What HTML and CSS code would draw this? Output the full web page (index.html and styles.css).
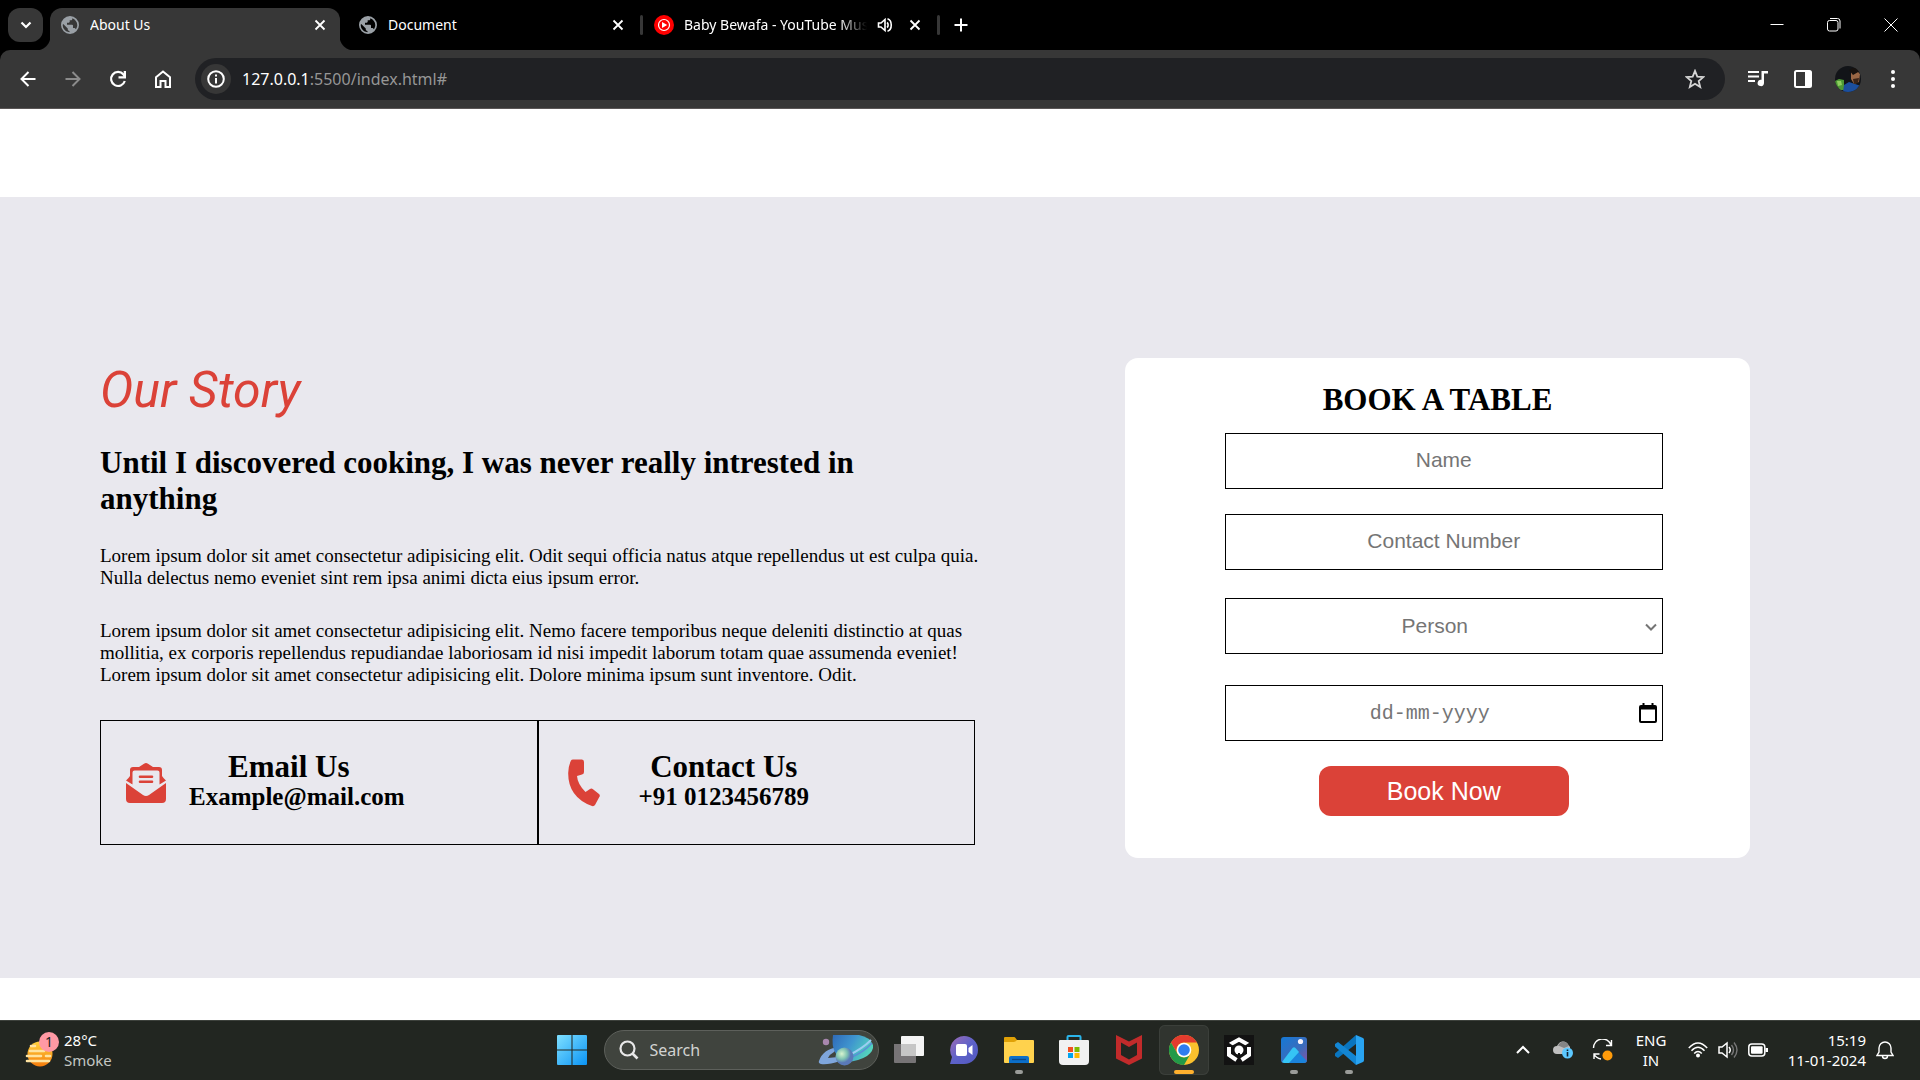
FILE: index.html
```html
<!DOCTYPE html>
<html lang="en">
<head>
<meta charset="utf-8">
<title>About Us</title>
<link rel="stylesheet" href="styles.css">
</head>
<body>
<svg class="defs" aria-hidden="true">
  <defs>
    <symbol id="globe" viewBox="0 0 24 24"><path fill="#9aa0a6" fill-rule="evenodd" d="M12 0a12 12 0 1 0 0 24 12 12 0 0 0 0-24zM3 10.500 9 16.500v1.300c0 1.200 1 2.300 2.300 2.300v1.400C6 21 2.300 17 2.300 12c0-.5.100-1 .700-1.500zM15 3c3.900 1.400 6.700 5 6.700 9 0 2.200-.8 4.200-2 5.800-.4-1-1.300-1.700-2.400-1.700H16v-3.400c0-.7-.5-1.200-1.200-1.200H8V9h2.400c.7 0 1.200-.6 1.200-1.200V5.500H14c.8 0 1.400-1 1-2.500z"/></symbol>
    <symbol id="close" viewBox="0 0 12 12"><path fill="none" stroke="#fff" stroke-width="1.800" d="M1.500 1.500l9 9M10.500 1.500l-9 9"/></symbol>
  </defs>
</svg>

<header class="browser">
  <div class="tabs">
    <button class="tab-search" aria-label="Search tabs"><svg width="12" height="12" viewBox="0 0 12 12"><path fill="none" stroke="#fff" stroke-width="2.200" d="M1.500 3.500 6 8l4.500-4.500"/></svg></button>
    <div class="tab active">
      <svg width="18" height="18"><use href="#globe"/></svg><span class="tab-title">About Us</span>
      <button class="tab-close" aria-label="Close tab"><svg width="12" height="12"><use href="#close"/></svg></button>
    </div>
    <span class="divider hidden"></span>
    <div class="tab">
      <svg width="18" height="18"><use href="#globe"/></svg><span class="tab-title">Document</span>
      <button class="tab-close" aria-label="Close tab"><svg width="12" height="12"><use href="#close"/></svg></button>
    </div>
    <span class="divider"></span>
    <div class="tab media">
      <svg width="20" height="20" viewBox="0 0 20 20"><circle cx="10" cy="10" r="10" fill="#f00"/><circle cx="10" cy="10" r="5.500" fill="none" stroke="#fff" stroke-width="1.200"/><path fill="#fff" d="M8 7l5.200 3L8 13z"/></svg><span class="tab-title fade">Baby Bewafa - YouTube Mus</span>
      <svg width="16" height="16" viewBox="0 0 16 16"><path fill="none" stroke="#fff" stroke-width="1.600" d="M1.500 6v4H4l4 3.500v-11L4 6zM10 5.500c1.500 1 1.500 4 0 5M10.500 1.800c5 1.500 5 11 0 12.400"/></svg>
      <button class="tab-close" aria-label="Close tab"><svg width="12" height="12"><use href="#close"/></svg></button>
    </div>
    <span class="divider"></span>
    <button class="new-tab" aria-label="New tab"><svg width="14" height="14" viewBox="0 0 14 14"><path stroke="#fff" stroke-width="2" d="M7 .5v13M.5 7h13"/></svg></button>
    <div class="window-buttons">
      <button aria-label="Minimize"><svg width="14" height="14" viewBox="0 0 14 14"><path stroke="#fff" d="M.5 6.500h13"/></svg></button>
      <button aria-label="Restore"><svg width="14" height="14" viewBox="0 0 14 14"><rect x=".5" y="2.500" width="10.500" height="10.500" rx="2" fill="none" stroke="#fff"/><path fill="none" stroke="#fff" d="M3 .5h7.500q2.500 0 2.500 2.500v7.500"/></svg></button>
      <button aria-label="Close"><svg width="14" height="14" viewBox="0 0 14 14"><path stroke="#fff" d="M.5.5l13 13M13.500.5l-13 13"/></svg></button>
    </div>
  </div>

  <div class="toolbar">
    <button class="tool" aria-label="Back"><svg width="16" height="16" viewBox="0 0 16 16"><path fill="none" stroke="#fff" stroke-width="2" d="M15.500 8H2M8.500 1 1.500 8l7 7"/></svg></button>
    <button class="tool" aria-label="Forward"><svg width="16" height="16" viewBox="0 0 16 16"><path fill="none" stroke="#8b8b8b" stroke-width="2" d="M.5 8H14M7.500 1l7 7-7 7"/></svg></button>
    <button class="tool" aria-label="Reload"><svg width="18" height="18" viewBox="0 0 18 18"><path fill="none" stroke="#fff" stroke-width="2.200" d="M15.800 11A7 7 0 1 1 14.500 4.500L16 6.500"/><path fill="#fff" d="M17 1v7.500h-7.500V6.300h5.200V1z"/></svg></button>
    <button class="tool" aria-label="Home"><svg width="18" height="18" viewBox="0 0 18 18"><path fill="none" stroke="#fff" stroke-width="2" d="M2 7.200 9 1.500l7 5.700V17h-4.500v-6h-5v6H2z"/></svg></button>
    <div class="omnibox">
      <button class="site-info" aria-label="Site information"><svg width="18" height="18" viewBox="0 0 18 18"><circle cx="9" cy="9" r="7.800" fill="none" stroke="#fff" stroke-width="2"/><path fill="#fff" d="M8 4.500h2v2H8zM8 8h2v5.500H8z"/></svg></button>
      <span class="url"><b>127.0.0.1</b>:5500/index.html#</span>
      <button class="star" aria-label="Bookmark"><svg width="20" height="20" viewBox="0 0 20 20"><path fill="none" stroke="#d5d5d5" stroke-width="1.800" d="M10 1.900l2.300 5.700 6 .5-4.600 3.900 1.500 6L10 14.700 4.800 18l1.500-6L1.700 8.100l6-.5z"/></svg></button>
    </div>
    <button class="tool" aria-label="Media control"><svg width="20" height="18" viewBox="0 0 20 18"><path fill="#fff" d="M0 1h11v2H0zM0 5.500h11v2H0zM0 10h7v2H0zM13.500 1H20v2.500h-4V13a3.200 3.200 0 1 1-2.500-3.200z"/></svg></button>
    <button class="tool" aria-label="Side panel"><svg width="18" height="18" viewBox="0 0 18 18"><rect x="1" y="1" width="16" height="16" rx="1.500" fill="none" stroke="#fff" stroke-width="2"/><path fill="#fff" d="M11 1h6v16h-6z"/></svg></button>
    <button class="tool" aria-label="Profile"><svg width="26" height="26" viewBox="0 0 26 26"><clipPath id="av"><circle cx="13" cy="13" r="13"/></clipPath><g clip-path="url(#av)"><path fill="#121418" d="M0 0h26v26H0z"/><path fill="#4d9a35" d="M0 15l4-2 5 1v10H0z"/><path fill="#8fce60" d="M2 15l4 0 1 4-4 1z"/><path fill="#1c4f9e" d="M8 26l1-7 5-3 6 2 6 2v6z"/><path fill="#9a6745" d="M16 6q6-3 9 2l-1 8-5 2-3-5z"/><path fill="#3a2418" d="M18 13l6-1-1 5-4 1z"/><path fill="#17120f" d="M14 4q7-5 11 1l-7 4z"/></g></svg></button>
    <button class="tool" aria-label="Menu"><svg width="4" height="18" viewBox="0 0 4 18"><g fill="#fff"><circle cx="2" cy="2" r="2"/><circle cx="2" cy="9" r="2"/><circle cx="2" cy="16" r="2"/></g></svg></button>
  </div>
</header>

<main class="page">
  <section class="about">
    <article class="story">
      <h1>Our Story</h1>
      <h2>Until I discovered cooking, I was never really intrested in anything</h2>
      <p>Lorem ipsum dolor sit amet consectetur adipisicing elit. Odit sequi officia natus atque repellendus ut est culpa quia. Nulla delectus nemo eveniet sint rem ipsa animi dicta eius ipsum error.</p>
      <p>Lorem ipsum dolor sit amet consectetur adipisicing elit. Nemo facere temporibus neque deleniti distinctio at quas mollitia, ex corporis repellendus repudiandae laboriosam id nisi impedit laborum totam quae assumenda eveniet! Lorem ipsum dolor sit amet consectetur adipisicing elit. Dolore minima ipsum sunt inventore. Odit.</p>
      <div class="contacts">
        <div class="contact email">
          <svg width="40" height="40" viewBox="0 0 40 40"><path fill="#db4238" fill-rule="evenodd" d="M0 17.500 2.500 15 4 13V7q0-3 3-3h6l5-3.300q2-1.400 4 0L27 4h6q3 0 3 3v6l1.500 2 2.500 2.500-6.500 4V9.500Q33.500 7.500 31.500 7.500h-23Q6.500 7.500 6.500 9.500v12zM14 12.500h12a1.300 1.300 0 0 1 0 2.600H14a1.300 1.300 0 0 1 0-2.600zM14 17.500h12a1.300 1.300 0 0 1 0 2.600H14a1.300 1.300 0 0 1 0-2.600zM0 20l17 12q3 2 6 0L40 20v16q0 4-4 4H4q-4 0-4-4z"/></svg>
          <div class="contact-text"><h3>Email Us</h3><h4>Example@mail.com</h4></div>
        </div>
        <div class="contact phone">
          <svg width="32" height="48" viewBox="0 0 32 48"><path fill="#db4238" d="M3 1.500Q3.500.5 5 .5h9q2 0 2 2.500v10q0 2-2 2.500l-5 1.500q.5 8 8.500 16l4.500-3q1.500-1 3 .2l6 4.800q1.500 1.500.3 3L27 46q-1 1.500-3 1Q0 38 .2 14 .3 7 3 1.500z"/></svg>
          <div class="contact-text"><h3>Contact Us</h3><h4>+91 0123456789</h4></div>
        </div>
      </div>
    </article>

    <form class="booking">
      <h2>BOOK A TABLE</h2>
      <div class="fields">
        <input type="text" placeholder="Name" aria-label="Name">
        <input type="tel" placeholder="Contact Number" aria-label="Contact Number">
        <div class="field"><select aria-label="Person"><option>Person</option><option>1</option><option>2</option><option>3</option></select>
          <svg class="arrow" width="12" height="8" viewBox="0 0 12 8"><path fill="none" stroke="#757575" stroke-width="2" d="M1 1.500l5 5 5-5"/></svg></div>
        <div class="field"><input class="date" type="text" placeholder="dd-mm-yyyy" aria-label="Date">
          <svg class="calendar" width="18" height="20" viewBox="0 0 18 20"><path fill="#000" fill-rule="evenodd" d="M2 2h1.500V0h2v2h7V0h2v2H16q2 0 2 2v14q0 2-2 2H2q-2 0-2-2V4q0-2 2-2zM2 6.500V18h14V6.500z"/></svg></div>
        <button type="button" class="book">Book Now</button>
      </div>
    </form>
  </section>
</main>

<footer class="taskbar">
  <button class="weather">
    <svg width="34" height="36" viewBox="0 0 34 36"><defs><linearGradient id="sun" x2="0" y2="1"><stop stop-color="#ffd23e"/><stop offset="1" stop-color="#f57c0c"/></linearGradient></defs><circle cx="15" cy="22" r="12.500" fill="url(#sun)"/><g stroke="#ffe3a0" stroke-width="2.600" stroke-linecap="round"><path d="M6 14h4M5 19h14M2 24h14M21 24h4M2 29h22"/></g><circle cx="24" cy="10" r="10" fill="#ff99a4"/><text x="24" y="15" text-anchor="middle" class="badge">1</text></svg>
    <span>28°C<small>Smoke</small></span>
  </button>

  <nav class="apps">
    <button class="app" aria-label="Start"><svg width="30" height="30" viewBox="0 0 29 29"><defs><linearGradient id="win" x2="1" y2="1"><stop stop-color="#7fe0ff"/><stop offset="1" stop-color="#0a93f5"/></linearGradient></defs><path fill="url(#win)" d="M0 1q0-1 1-1h13v14H0zM15 0h13q1 0 1 1v13H15zM0 15h14v14H1q-1 0-1-1zM15 15h14v13q0 1-1 1H15z"/></svg></button>
    <label class="search">
      <svg width="20" height="20" viewBox="0 0 20 20"><circle cx="8.500" cy="8.500" r="7" fill="none" stroke="#e8e8e8" stroke-width="2.200"/><path stroke="#e8e8e8" stroke-width="2.600" d="M13.500 13.500l5 5"/></svg>
      <input type="search" placeholder="Search" aria-label="Search">
      <svg width="56" height="32" viewBox="0 0 56 32"><defs><linearGradient id="pl" x2="1" y2=".4"><stop stop-color="#2f6ab8"/><stop offset=".5" stop-color="#3f95cf"/><stop offset="1" stop-color="#54d3bd"/></linearGradient><radialGradient id="mo" cx=".35" cy=".35"><stop stop-color="#d8f4cf"/><stop offset=".6" stop-color="#7fc3b2"/><stop offset="1" stop-color="#5a79b8"/></radialGradient></defs><path fill="#7fa6dc" d="M1 27Q5 15 20 13l-4 5q-4 2-6 6l10-1 2 4q-12 4-19 3-3-1-2-3z"/><path fill="url(#pl)" d="M15 1h26q11 2 14 10 1 6-6 11-8 5-20 6Q12 22 15 1z"/><path fill="none" stroke="#9ccdf2" stroke-width="2" d="M31 21Q44 15 53 6"/><path fill="none" stroke="#5a8fd6" stroke-width="1.500" d="M32 24Q46 18 54 9"/><circle cx="26.500" cy="22.500" r="9" fill="url(#mo)"/><circle cx="8" cy="8" r="3.200" fill="#a887ae"/></svg>
    </label>
    <button class="app" aria-label="Task view"><svg width="30" height="28" viewBox="0 0 30 28"><path fill="#f4f4f4" d="M8 0h21q1 0 1 1v18q0 1-1 1H8q-1 0-1-1V1q0-1 1-1z"/><path fill="#777476" d="M0 8h22v18q0 1-1 1H1q-1 0-1-1z"/><path fill="#c6c6c6" d="M7 8h15v12H7z"/></svg></button>
    <button class="app" aria-label="Chat"><svg width="30" height="30" viewBox="0 0 30 30"><defs><linearGradient id="ch" x1="0" x2="1" y2="1"><stop stop-color="#a06bb4"/><stop offset=".5" stop-color="#5d62c9"/><stop offset="1" stop-color="#5358c0"/></linearGradient></defs><path fill="url(#ch)" d="M15 1a14 14 0 1 1 0 28H1l2-7A14 14 0 0 1 15 1z"/><rect x="7" y="9" width="11" height="12" rx="2" fill="#fff"/><path fill="#fff" d="M19.500 13l4-3v10l-4-3z"/></svg></button>
    <button class="app running" aria-label="File Explorer"><svg width="30" height="28" viewBox="0 0 30 28"><path fill="#e0a106" d="M0 2q0-1 1-1h9q1 0 1.500 1L13 4h16v5H0z"/><path fill="#ffd24d" d="M0 6h10q2-.5 3-2h16q1 0 1 1v21q0 1-1 1H1q-1 0-1-1z"/><path fill="#0c6fc9" d="M5 27v-5q0-2 2-2h16q2 0 2 2v5z"/><path stroke="#0b4786" stroke-width="1.300" d="M8 23.500h14"/></svg></button>
    <button class="app" aria-label="Store"><svg width="30" height="30" viewBox="0 0 30 30"><path fill="none" stroke="#2bb5ea" stroke-width="2" d="M8.500 6V2q0-1 1-1h11q1 0 1 1v4"/><path fill="#f1f1f1" d="M1 5h28q1 0 1 1v20q0 4-4 4H4q-4 0-4-4V6q0-1 1-1z"/><path fill="#f25022" d="M9 12h5v5H9z"/><path fill="#7fba00" d="M15.500 12h5v5h-5z"/><path fill="#00a4ef" d="M9 18h5v5H9z"/><path fill="#ffb900" d="M15.500 18h5v5h-5z"/></svg></button>
    <button class="app" aria-label="Antivirus"><svg width="28" height="30" viewBox="0 0 28 30"><path fill="#c22b2b" fill-rule="evenodd" d="M1 0l13 6.500L27 0v23.500L14 30 1 23.500zM6 7.500V20l8 4.500 8-4.500V7.500L14 12z"/></svg></button>
    <button class="app current" aria-label="Chrome"><svg width="30" height="30" viewBox="0 0 30 30"><circle cx="15" cy="15" r="15" fill="#fbc12d"/><path fill="#e33b2e" d="M2 7.500A15 15 0 0 1 28 7.500H15a7.500 7.500 0 0 0-6.500 11.300z"/><path fill="#229a48" d="M2 7.500 8.500 18.800A7.500 7.500 0 0 0 21.500 18.800L15 30A15 15 0 0 1 2 7.500z"/><circle cx="15" cy="15" r="7.300" fill="#fff"/><circle cx="15" cy="15" r="5.800" fill="#2f7df0"/></svg></button>
    <button class="app" aria-label="Unity Hub"><svg width="30" height="30" viewBox="0 0 30 30"><path fill="#121212" d="M0 0h30v30H0z"/><circle cx="15" cy="15" r="4.500" fill="#fff"/><g fill="none" stroke="#fff" stroke-width="4"><path d="M6 9.500 15 4.500l9 5M5 12v8l7.500 5M25 12v8l-7.500 5"/></g><path stroke="#121212" stroke-width="2" d="M15 18v9M5 9l5 3.500M25 9l-5 3.500"/></svg></button>
    <button class="app running" aria-label="Photos"><svg width="26" height="26" viewBox="0 0 26 26"><defs><linearGradient id="ph" x2="1" y2="1"><stop stop-color="#1479d6"/><stop offset=".6" stop-color="#3c6bbb"/><stop offset="1" stop-color="#8752a4"/></linearGradient></defs><rect width="26" height="26" rx="3" fill="url(#ph)"/><path fill="#1b83dc" d="M8 26l8-12 10 10q-1 2-3 2z"/><path fill="#35c4f5" d="M1 25 11.500 11q1.500-1.500 3 0l3.500 4L8 26H3z"/><circle cx="19.500" cy="4.500" r="2.600" fill="#f6f2fb"/></svg></button>
    <button class="app running" aria-label="Code"><svg width="30" height="30" viewBox="0 0 30 30"><path fill="#0a75bf" d="M1 18.500 22 0v9L4 23 1 21z"/><path fill="#1386d4" d="M1 11.500 22 30v-9L4 7 1 9z"/><path fill="#29a4f2" d="M22 0l7 3q1 .5 1 2v20q0 1.500-1 2l-7 3z"/></svg></button>
  </nav>

  <div class="tray">
    <button class="tray-wide" aria-label="Hidden icons"><svg width="14" height="9" viewBox="0 0 14 9"><path fill="none" stroke="#fff" stroke-width="2" d="M1 8l6-6 6 6"/></svg></button>
    <button class="tray-wide" aria-label="OneDrive"><svg width="20" height="18" viewBox="0 0 20 18"><path fill="#bfbfbf" d="M4 13a4 4 0 0 1 0-8Q8-2 14 2l3 4v7z"/><path fill="#858585" d="M5 4.500Q9-2 14 2l2 3-5 2z"/><circle cx="14.500" cy="12" r="5.500" fill="#5cc8ff"/><path stroke="#123" stroke-width="1.600" d="M14.500 8.500v1.500M14.500 11v4.500"/></svg></button>
    <button class="tray-wide" aria-label="Update"><svg width="22" height="22" viewBox="0 0 22 22"><path fill="none" stroke="#fff" stroke-width="1.400" d="M1.500 9A9 9 0 0 1 19 6M19.500 1v5.500H14M9 20Q4 19 2 15M7.500 15H2v5"/><circle cx="15.500" cy="16.500" r="5" fill="#ff9b0a"/></svg></button>
    <button class="language">ENG<br>IN</button>
    <button class="status" aria-label="Network, volume and battery">
      <svg width="20" height="16" viewBox="0 0 20 16"><g fill="none" stroke="#fff" stroke-width="1.500"><path d="M.8 6q9.200-10 18.400 0M3.500 8.700q6.500-7 13 0M6.200 11.400q3.800-4 7.600 0"/></g><circle cx="10" cy="13.500" r="2" fill="#fff"/></svg>
      <svg width="20" height="18" viewBox="0 0 20 18"><path fill="none" stroke="#fff" stroke-width="1.500" d="M1 6v6h3l5 4V2L4 6zM11 6q2.500 3 0 6"/><path fill="none" stroke="#777" stroke-width="1.400" d="M13.500 4q4 5 0 10M16 1.500q6 7.500 0 15"/></svg>
      <svg width="20" height="14" viewBox="0 0 20 14"><rect x=".8" y="1" width="16" height="12" rx="3" fill="none" stroke="#fff" stroke-width="1.500"/><rect x="3" y="3.200" width="11.600" height="7.600" rx="1" fill="#fff"/><path fill="#fff" d="M17.500 5h2.500v4h-2.500z"/></svg>
    </button>
    <button class="clock">15:19<br>11-01-2024</button>
    <button class="bell" aria-label="Notifications"><svg width="18" height="20" viewBox="0 0 18 20"><path fill="none" stroke="#fff" stroke-width="1.400" d="M3 8a6 6 0 0 1 12 0v4l2 3.500H1L3 12zM6.500 16q0 2.500 2.500 2.500t2.500-2.500"/></svg></button>
  </div>
</footer>
</body>
</html>
```
FILE: styles.css
```css
* { box-sizing: border-box; margin: 0; padding: 0; }
body {
  min-height: 100vh;
  display: flex;
  flex-direction: column;
  background: #fff;
  font-family: "Liberation Serif", "Times New Roman", serif;
}
button { border: 0; background: none; color: inherit; font: inherit; }
svg { display: block; flex: none; }
.defs { position: absolute; width: 0; height: 0; }

/* Browser window */
.browser { background: #000; color: #fff; font-family: "Noto Sans", sans-serif; }
.tabs { display: flex; align-items: center; height: 50px; padding: 0 1px 0 8px; }
.tab-search {
  position: relative; z-index: 1;
  display: grid; place-items: center;
  width: 35px; height: 34px; margin-right: 7px;
  border-radius: 12px; background: #373737;
}
.tab {
  display: flex; align-items: center; gap: 11px;
  width: 290px; height: 42px; margin-top: 8px;
  padding: 0 14px 8px 11px;
  font-size: 14px; line-height: 20px;
}
.tab.active { position: relative; background: #373737; border-radius: 12px 12px 0 0; }
.tab.active::before, .tab.active::after {
  content: ""; position: absolute; bottom: 0; width: 14px; height: 14px;
}
.tab.active::before { right: 100%; background: radial-gradient(circle at 0 0, #000 14px, #373737 15px); }
.tab.active::after { left: 100%; background: radial-gradient(circle at 100% 0, #000 14px, #373737 15px); }
.tab.media { padding-left: 9px; gap: 10px; }
.tab-title { flex: 1; min-width: 0; overflow: hidden; white-space: nowrap; }
.fade { mask-image: linear-gradient(to right, #000 85%, transparent); }
.tab-close { display: grid; place-items: center; }
.media .tab-close { margin-left: 6px; }
.divider { width: 3px; height: 20px; margin: 0 2px; border-radius: 2px; background: #373737; }
.divider.hidden { margin-right: 3px; visibility: hidden; }
.new-tab { display: grid; place-items: center; width: 34px; height: 34px; margin-left: 2px; }
.window-buttons { display: flex; margin-left: auto; }
.window-buttons button { display: grid; place-items: center; width: 57px; height: 50px; }
.toolbar {
  display: flex; align-items: center;
  height: 59px; padding: 0 5px;
  background: #373737; border-bottom: 1px solid #5a5656;
  border-radius: 10px 10px 0 0;
}
.tool { display: grid; place-items: center; width: 45px; height: 42px; }
.omnibox {
  display: flex; align-items: center; flex: 1;
  height: 42px; margin: 0 10px; padding: 0 20px 0 6px;
  border-radius: 21px; background: #202124;
}
.site-info { display: grid; place-items: center; width: 30px; height: 30px; border-radius: 50%; background: #373737; }
.url { flex: 1; margin-left: 11px; font-size: 16px; line-height: 24px; color: #969696; }
.url b { font-weight: 400; color: #fff; }

/* Page */
.page { flex: 1; padding-top: 88px; }
.about {
  display: grid; grid-template-columns: 875fr 625fr; gap: 150px; align-items: start;
  padding: 161px 170px 120px 100px;
  background: #e9e8ee;
}
.story h1 {
  margin-bottom: 23px;
  font: italic 400 50px/64px Roboto, sans-serif;
  color: #db4238;
}
.story h2 { margin-bottom: 28px; font-size: 31px; line-height: 36px; }
.story p { margin: 0 -10px 31px 0; font-size: 19px; line-height: 22px; }
.contacts { display: grid; grid-template-columns: 1fr 1fr; margin-top: 34px; }
.contact { display: flex; align-items: center; height: 125px; padding-left: 25px; border: 1px solid #000; }
.contact-text { padding-bottom: 3px; text-align: center; }
.email .contact-text { margin-left: 23px; }
.email h3 { margin-right: 16px; }
.phone { padding-left: 29px; }
.phone .contact-text { margin-left: 39px; }
.contact h3 { font-size: 31px; line-height: 32px; }
.contact h4 { font-size: 25px; line-height: 28px; }

/* Booking form */
.booking { padding: 24px 0 42px; border-radius: 13px; background: #fff; }
.booking h2 { margin-bottom: 15px; font-size: 31px; line-height: 36px; text-align: center; }
.fields { display: grid; gap: 25px; width: 70%; margin-left: 16%; }
.fields input, .fields select {
  display: block; width: 100%; height: 56px; padding: 0 20px 2px;
  border: 1px solid #000; border-radius: 0; outline: 0; background: #fff;
  font: 21px "Liberation Sans", Arial, sans-serif; text-align: center; color: #757575;
}
.fields input::placeholder { color: #757575; opacity: 1; }
.fields select { appearance: none; padding-right: 38px; text-align-last: center; }
.fields .date { padding: 0 48px 0 20px; font: 20px "Liberation Mono", monospace; }
.field { position: relative; margin-top: 3px; }
.field + .field { margin-top: 6px; }
.arrow { position: absolute; right: 6px; top: 25px; }
.calendar { position: absolute; right: 6px; top: 18px; }
.book {
  justify-self: center; width: 250px; height: 50px;
  border-radius: 12px; background: #db4238; color: #fff;
  font: 25px "Liberation Sans", Arial, sans-serif;
}

/* Taskbar */
.taskbar {
  display: grid; grid-template-columns: 1fr auto 1fr; align-items: center;
  height: 60px; padding-bottom: 2px; background: #222621; border-top: 1px solid #3d413c;
  color: #fff; font: 15px/20px "Noto Sans", sans-serif;
}
.weather { display: flex; align-items: center; gap: 5px; margin-left: 25px; text-align: left; }
.weather small { display: block; font-size: 15px; color: #c4c6c3; }
.badge { font-size: 14px; fill: #222; }
.apps { display: flex; align-items: center; gap: 5px; }
.app { position: relative; display: grid; place-items: center; width: 50px; height: 50px; border-radius: 6px; }
.app.current { background: #30342f; box-shadow: inset 0 0 0 1px #3b3f3a; }
.running::after, .current::after {
  content: ""; position: absolute; left: 50%; bottom: 1px; transform: translateX(-50%);
  width: 8px; height: 4px; border-radius: 2px; background: #9a9c99;
}
.current::after { width: 20px; background: #ffb02e; }
.search {
  display: flex; align-items: center;
  width: 275px; height: 40px; margin-left: 2px; padding: 0 4px 0 14px;
  border: 1px solid #5d605b; border-radius: 20px; background: #40443e;
}
.search input { flex: 1; min-width: 0; margin-left: 11px; border: 0; outline: 0; background: none; color: #fff; font: inherit; font-size: 16px; }
.search input::placeholder { color: #d2d3d1; opacity: 1; }
.tray { display: flex; justify-content: flex-end; align-items: center; padding-right: 20px; }
.tray-wide { display: grid; place-items: center; width: 40px; height: 50px; }
.language { width: 56px; margin-right: 4px; }
.status { display: flex; justify-content: space-around; align-items: center; width: 90px; height: 50px; }
.clock { width: 93px; text-align: right; white-space: nowrap; }
.bell { display: grid; place-items: center; width: 30px; height: 50px; margin-left: 4px; }
```
